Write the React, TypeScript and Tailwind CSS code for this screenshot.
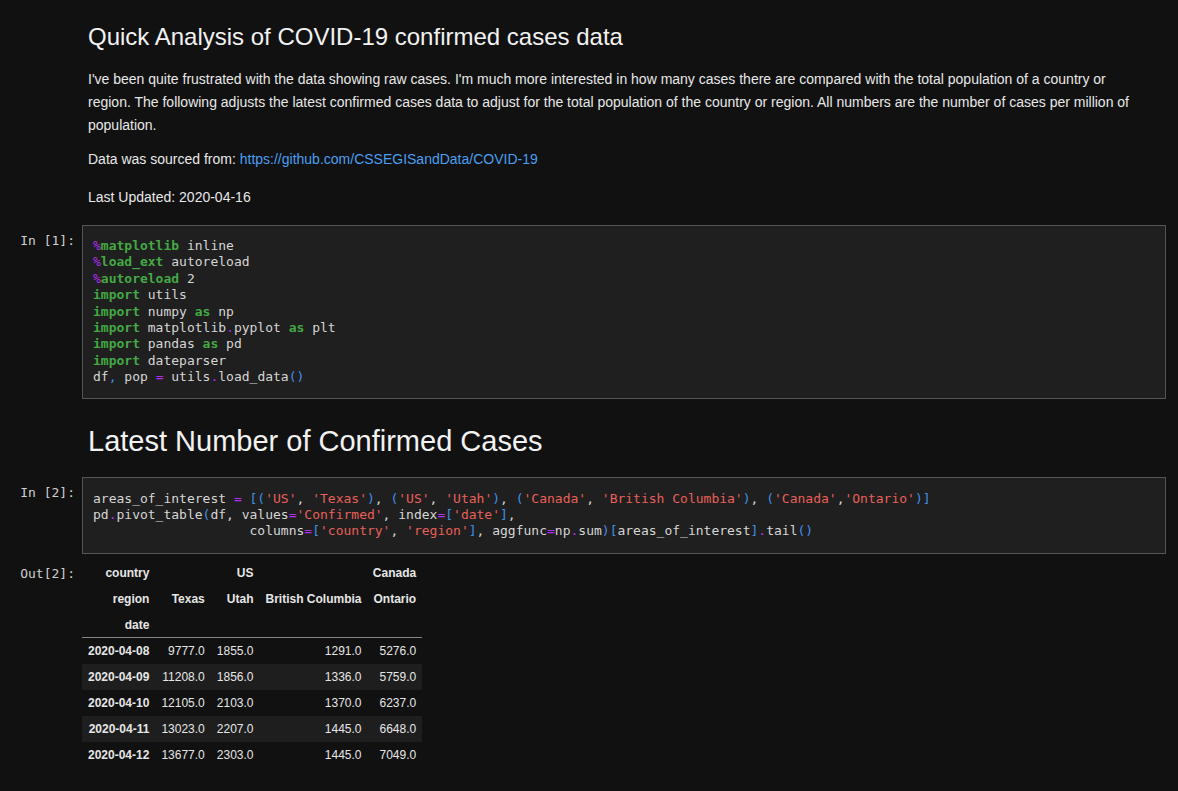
import React from 'react';

const sans = "font-['Liberation_Sans',Arial,sans-serif]";
const mono = "font-['DejaVu_Sans_Mono',monospace]";

// syntax helpers
const K = ({ children }: { children: React.ReactNode }) => (
  <span className="text-[#44a844] font-bold">{children}</span>
);
const O = ({ children }: { children: React.ReactNode }) => (
  <span className="text-[#b02ef0]">{children}</span>
);
const S = ({ children }: { children: React.ReactNode }) => (
  <span className="text-[#e8605a]">{children}</span>
);
const B = ({ children }: { children: React.ReactNode }) => (
  <span className="text-[#3f8fe6]">{children}</span>
);

function Prompt({ label }: { label: string }) {
  return (
    <div
      className={`w-[82px] shrink-0 pr-[7px] pt-[8px] text-right text-[13px] leading-[16.4px] text-[#cfcfcf] ${mono}`}
    >
      {label}
    </div>
  );
}

function CodeCell({ label, children, pad = 'pt-[12px] pb-[12px]' }: { label: string; children: React.ReactNode; pad?: string }) {
  return (
    <div className="flex">
      <Prompt label={label} />
      <div
        className={`flex-1 border border-[#555555] bg-[#1f1f1f] pl-[10px] ${pad} text-[13px] leading-[16.4px] text-[#d6d6d6] whitespace-pre ${mono}`}
      >
        {children}
      </div>
    </div>
  );
}

const rows = [
  ['2020-04-08', '9777.0', '1855.0', '1291.0', '5276.0'],
  ['2020-04-09', '11208.0', '1856.0', '1336.0', '5759.0'],
  ['2020-04-10', '12105.0', '2103.0', '1370.0', '6237.0'],
  ['2020-04-11', '13023.0', '2207.0', '1445.0', '6648.0'],
  ['2020-04-12', '13677.0', '2303.0', '1445.0', '7049.0'],
];

const th = 'h-[26px] px-[6px] py-0 text-right font-bold leading-[14px] whitespace-nowrap';
const td = 'h-[26px] px-[6px] py-0 text-right font-normal leading-[14px] whitespace-nowrap';

export default function App() {
  return (
    <div className={`min-h-[791px] w-full bg-[#111111] pr-[12px] pt-[22px] pb-[30px] ${sans}`}>
      {/* Markdown intro */}
      <div className="flex">
        <div className="w-[82px] shrink-0" />
        <div className="flex-1 pl-[6px] pr-[24px] text-[14px] text-[#e8e8e8]">
          <h1 className="text-[24px] leading-[30px] font-normal text-[#f2f2f2]">
            Quick Analysis of COVID-19 confirmed cases data
          </h1>
          <p className="mt-[16px] leading-[23px]">
            I've been quite frustrated with the data showing raw cases. I'm much more interested in how many cases
            there are compared with the total population of a country or region. The following adjusts the latest
            confirmed cases data to adjust for the total population of the country or region. All numbers are the
            number of cases per million of population.
          </p>
          <p className="mt-[11px] leading-[23px]">
            Data was sourced from:{' '}
            <a className="text-[#4a9ff0]" href="#">
              https://github.com/CSSEGISandData/COVID-19
            </a>
          </p>
          <p className="mt-[15px] leading-[23px]">Last Updated: 2020-04-16</p>
        </div>
      </div>

      {/* In [1] */}
      <div className="mt-[16px]">
        <CodeCell label="In [1]:" pad="pt-[12px] pb-[12px]">
          <div>
            <O>%</O>
            <K>matplotlib</K> inline
          </div>
          <div>
            <O>%</O>
            <K>load_ext</K> autoreload
          </div>
          <div>
            <O>%</O>
            <K>autoreload</K> 2
          </div>
          <div>
            <K>import</K> utils
          </div>
          <div>
            <K>import</K> numpy <K>as</K> np
          </div>
          <div>
            <K>import</K> matplotlib<O>.</O>pyplot <K>as</K> plt
          </div>
          <div>
            <K>import</K> pandas <K>as</K> pd
          </div>
          <div>
            <K>import</K> dateparser
          </div>
          <div>
            df<B>,</B> pop <O>=</O> utils<O>.</O>load_data<B>()</B>
          </div>
        </CodeCell>
      </div>

      {/* Markdown heading */}
      <div className="flex mt-[25px]">
        <div className="w-[82px] shrink-0" />
        <h2 className="flex-1 pl-[6px] text-[29px] leading-[34px] font-normal text-[#f2f2f2]">
          Latest Number of Confirmed Cases
        </h2>
      </div>

      {/* In [2] */}
      <div className="mt-[19px]">
        <CodeCell label="In [2]:" pad="pt-[13px] pb-[13px]">
          <div>
            areas_of_interest <O>=</O> <B>[(</B>
            <S>'US'</S>, <S>'Texas'</S>
            <B>)</B>, <B>(</B>
            <S>'US'</S>, <S>'Utah'</S>
            <B>)</B>, <B>(</B>
            <S>'Canada'</S>, <S>'British Columbia'</S>
            <B>)</B>, <B>(</B>
            <S>'Canada'</S>,<S>'Ontario'</S>
            <B>)]</B>
          </div>
          <div>
            pd<O>.</O>pivot_table<B>(</B>df, values<O>=</O>
            <S>'Confirmed'</S>, index<O>=</O>
            <B>[</B>
            <S>'date'</S>
            <B>]</B>,
          </div>
          <div>
            {'                    '}columns<O>=</O>
            <B>[</B>
            <S>'country'</S>, <S>'region'</S>
            <B>]</B>, aggfunc<O>=</O>np<O>.</O>sum<B>)[</B>areas_of_interest<B>]</B>
            <O>.</O>tail<B>()</B>
          </div>
        </CodeCell>
      </div>

      {/* Out [2] */}
      <div className="flex mt-[6px]">
        <div
          className={`w-[82px] shrink-0 pr-[7px] pt-[6px] text-right text-[13px] leading-[16.4px] text-[#cfcfcf] ${mono}`}
        >
          Out[2]:
        </div>
        <div className="flex-1">
          <table className="border-collapse text-[12px] text-[#e6e6e6]">
            <thead className="border-b border-[#858585]">
              <tr>
                <th className={th}>country</th>
                <th className={th} colSpan={2}>
                  US
                </th>
                <th className={th} colSpan={2}>
                  Canada
                </th>
              </tr>
              <tr>
                <th className={th}>region</th>
                <th className={th}>Texas</th>
                <th className={th}>Utah</th>
                <th className={th}>British Columbia</th>
                <th className={th}>Ontario</th>
              </tr>
              <tr>
                <th className={th}>date</th>
                <th className={th}></th>
                <th className={th}></th>
                <th className={th}></th>
                <th className={th}></th>
              </tr>
            </thead>
            <tbody>
              {rows.map((r, i) => (
                <tr key={r[0]} className={i % 2 === 1 ? 'bg-[#1e1e1e]' : ''}>
                  <th className={th}>{r[0]}</th>
                  {r.slice(1).map((v, j) => (
                    <td key={j} className={td}>
                      {v}
                    </td>
                  ))}
                </tr>
              ))}
            </tbody>
          </table>
        </div>
      </div>
    </div>
  );
}
